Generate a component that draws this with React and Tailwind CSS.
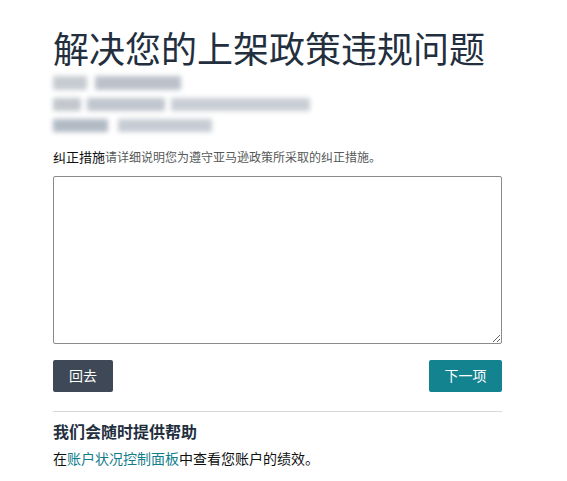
export default function App() {
  return (
    <main className="min-h-screen bg-white font-['Liberation_Sans','Noto_Sans_CJK_SC',sans-serif] text-[#0f1111]">
      <div className="ml-[53px] w-[449px] pt-[27px]">
        <h1 className="text-[36px] leading-[48px] text-[#232f3e] tracking-[0px]">解决您的上架政策违规问题</h1>

        {/* blurred account details */}
        <div className="mt-[1px] space-y-[8px] blur-[2.5px] opacity-80">
          <div className="flex gap-[8px] h-[14px]">
            <div className="w-[34px] bg-[#b9bfc6]" />
            <div className="w-[86px] bg-[#aab2bd]" />
          </div>
          <div className="flex gap-[6px] h-[13px]">
            <div className="w-[28px] bg-[#b4bac1]" />
            <div className="w-[78px] bg-[#b0b8c2]" />
            <div className="w-[139px] bg-[#bcc2cb]" />
          </div>
          <div className="flex gap-[10px] h-[13px]">
            <div className="w-[55px] bg-[#9ea8b5]" />
            <div className="w-[94px] bg-[#b8c0ca]" />
          </div>
        </div>

        <p className="mt-[17px] text-[12px] leading-[18px] text-[#565959]">
          <span className="text-[#0f1111] text-[13px]">纠正措施</span>请详细说明您为遵守亚马逊政策所采取的纠正措施。
        </p>

        <textarea className="mt-[9px] block w-[449px] h-[168px] border border-[#888c8c] rounded-[2px] resize-y outline-none p-2 text-sm" />

        <div className="mt-[16px] flex justify-between">
          <button className="w-[60px] h-[32px] rounded-[2px] bg-[#3e4857] text-white text-[14px]">回去</button>
          <button className="w-[73px] h-[32px] rounded-[2px] bg-[#138390] text-white text-[14px]">下一项</button>
        </div>

        <hr className="mt-[19px] border-0 border-t border-[#d5d9d9]" />

        <h2 className="mt-[9px] text-[16px] leading-[24px] font-bold text-[#232f3e]">我们会随时提供帮助</h2>
        <p className="mt-[4px] text-[14px] leading-[20px] text-[#0f1111]">
          在<a className="text-[#117d8c]">账户状况控制面板</a>中查看您账户的绩效。
        </p>
      </div>
    </main>
  );
}
